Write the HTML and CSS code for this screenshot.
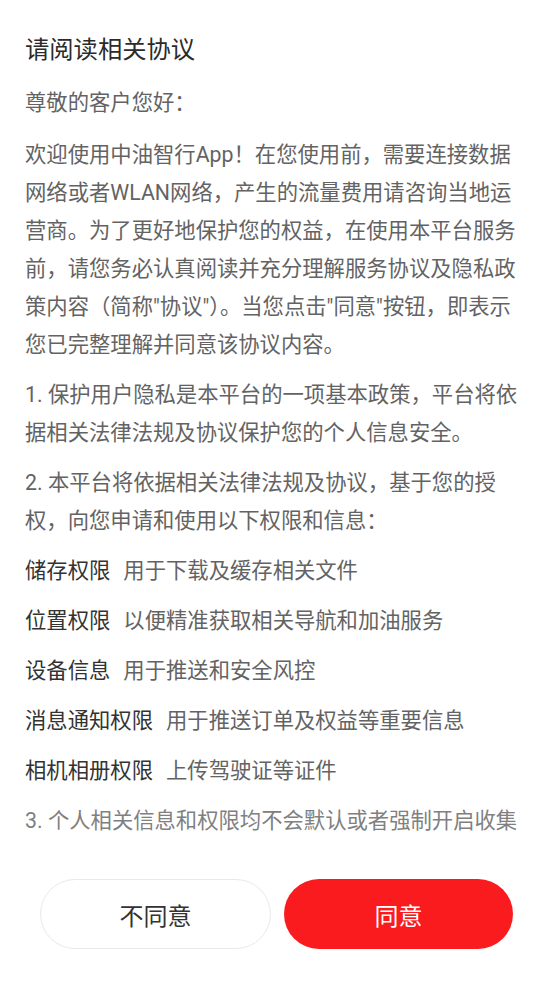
FILE: index.html
```html
<!DOCTYPE html>
<html lang="zh-CN">
<head>
<meta charset="utf-8">
<title>请阅读相关协议</title>
<link rel="stylesheet" href="styles.css">
</head>
<body>
<div class="dialog">
  <div class="content">
    <h1 class="title">请阅读相关协议</h1>
    <p class="para greet">尊敬的客户您好：</p>
    <p class="para">欢迎使用中油智行App！在您使用前，需要连接数据网络或者WLAN网络，产生的流量费用请咨询当地运营商。为了更好地保护您的权益，在使用本平台服务前，请您务必认真阅读并充分理解服务协议及隐私政策内容（简称"协议"）。当您点击"同意"按钮，即表示您已完整理解并同意该协议内容。</p>
    <p class="para">1. 保护用户隐私是本平台的一项基本政策，平台将依据相关法律法规及协议保护您的个人信息安全。</p>
    <p class="para">2. 本平台将依据相关法律法规及协议，基于您的授权，向您申请和使用以下权限和信息：</p>
    <p class="para perm"><span class="perm-name">储存权限</span><span class="perm-desc">用于下载及缓存相关文件</span></p>
    <p class="para perm"><span class="perm-name">位置权限</span><span class="perm-desc">以便精准获取相关导航和加油服务</span></p>
    <p class="para perm"><span class="perm-name">设备信息</span><span class="perm-desc">用于推送和安全风控</span></p>
    <p class="para perm"><span class="perm-name">消息通知权限</span><span class="perm-desc">用于推送订单及权益等重要信息</span></p>
    <p class="para perm"><span class="perm-name">相机相册权限</span><span class="perm-desc">上传驾驶证等证件</span></p>
    <p class="para muted">3. 个人相关信息和权限均不会默认或者强制开启收集</p>
  </div>
  <div class="actions">
    <button class="btn btn-cancel" type="button">不同意</button>
    <button class="btn btn-ok" type="button">同意</button>
  </div>
</div>
</body>
</html>
```
FILE: styles.css
```css
* {
  box-sizing: border-box;
}

html, body {
  margin: 0;
  padding: 0;
  background: #ffffff;
}

body {
  font-family: Roboto, "Noto Sans CJK SC", "Noto Sans", sans-serif;
}

.dialog {
  width: 553px;
  height: 983px;
  display: flex;
  flex-direction: column;
  background: #ffffff;
}

.content {
  height: 845px;
  overflow: hidden;
  padding: 32px 25px 0 25px;
}

.title {
  margin: 0 0 16px 0;
  font-size: 24.3px;
  line-height: 36px;
  font-weight: 400;
  color: #2b2b2b;
}

.para {
  margin: 0 0 12px 0;
  font-size: 21.33px;
  line-height: 38px;
  color: #636363;
}

.greet {
  margin-bottom: 14px;
}

.perm {
  display: flex;
  white-space: nowrap;
}

.perm-name {
  color: #333333;
  margin-right: 13px;
}

.perm-desc {
  color: #636363;
}

.muted {
  color: #808080;
}

.actions {
  display: flex;
  gap: 13px;
  padding: 34px 40px 0 40px;
}

.btn {
  flex: 1;
  height: 70px;
  border-radius: 35px;
  font-family: Roboto, "Noto Sans CJK SC", sans-serif;
  font-size: 24px;
  cursor: pointer;
}

.btn-cancel {
  background: #ffffff;
  border: 1px solid #e9e9e9;
  color: #333333;
}

.btn-ok {
  background: #fa1b1e;
  border: none;
  color: #ffffff;
}
```
